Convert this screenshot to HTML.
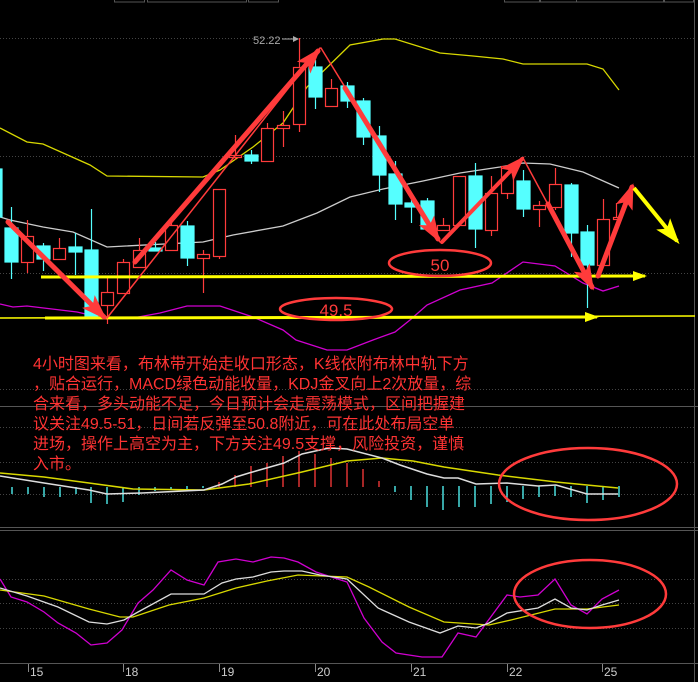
<!DOCTYPE html>
<html><head><meta charset="utf-8"><style>
html,body{margin:0;padding:0;background:#000;}
svg{display:block;}
.t{font-family:"Liberation Sans","Noto Sans CJK SC",sans-serif;}
</style></head><body>
<svg width="698" height="682" viewBox="0 0 698 682" xmlns="http://www.w3.org/2000/svg">
<defs>
<marker id="rh" markerUnits="userSpaceOnUse" markerWidth="26" markerHeight="18" refX="22" refY="9" orient="auto"><path d="M0,0 L26,9 L0,18 L6,9 z" fill="#ff3b3b"/></marker>
<marker id="yh" markerUnits="userSpaceOnUse" markerWidth="26" markerHeight="18" refX="22" refY="9" orient="auto"><path d="M0,0 L26,9 L0,18 L6,9 z" fill="#ffff00"/></marker>
<marker id="yh2" markerUnits="userSpaceOnUse" markerWidth="14" markerHeight="10" refX="12" refY="5" orient="auto"><path d="M0,0 L14,5 L0,10 z" fill="#ffff00"/></marker>
</defs>
<rect width="698" height="682" fill="#000"/>
<!-- top tabs -->
<g fill="none" stroke="#555" stroke-width="1">
<rect x="114.5" y="-5" width="30" height="7"/><rect x="147.5" y="-5" width="99" height="7"/><rect x="248.5" y="-5" width="30" height="7"/>
<rect x="504.5" y="-5" width="35" height="7"/><rect x="540.5" y="-5" width="36" height="7"/><rect x="576.5" y="-5" width="87" height="7"/><rect x="664.5" y="-5" width="29" height="7"/>
</g>
<!-- grid -->
<g stroke="#444" stroke-width="1" stroke-dasharray="1,2">
<line x1="0" y1="38.5" x2="694" y2="38.5"/><line x1="0" y1="156.5" x2="694" y2="156.5"/><line x1="0" y1="273.5" x2="694" y2="273.5"/><line x1="0" y1="389.5" x2="694" y2="389.5"/>
<line x1="0" y1="427.5" x2="694" y2="427.5"/><line x1="0" y1="462.5" x2="694" y2="462.5"/><line x1="0" y1="494.5" x2="694" y2="494.5"/>
<line x1="0" y1="579.5" x2="694" y2="579.5"/><line x1="0" y1="603.5" x2="694" y2="603.5"/><line x1="0" y1="628.5" x2="694" y2="628.5"/>
</g>
<g stroke="#555" stroke-width="1">
<line x1="0" y1="406.5" x2="698" y2="406.5"/><line x1="0" y1="527.5" x2="698" y2="527.5"/><line x1="0" y1="530.5" x2="698" y2="530.5"/><line x1="0" y1="663.5" x2="698" y2="663.5"/>
<line x1="694.5" y1="0" x2="694.5" y2="682"/>
</g>
<!-- bollinger -->
<polyline fill="none" stroke="#d8d800" stroke-width="1.3" points="0,128 27,142 43,144 90,165 107,176 203,177 220,170 253,147 283,123 307,87 350,45 383,39 395,39 440,53 473,56 503,59 523,64 587,64 603,69 619,90"/>
<polyline fill="none" stroke="#ccc" stroke-width="1.3" points="0,217 10,220 43,227 73,232 107,247 203,242 233,235 283,226 317,213 350,197 383,189 423,181 460,173 500,167 523,163 550,164 583,172 619,188"/>
<polyline fill="none" stroke="#d000d0" stroke-width="1.3" points="0,304 13,307 27,306 77,312 103,318 133,318 160,313 187,306 220,306 253,317 283,330 296,340 327,350 347,350 373,340 395,332 410,320 427,305 460,290 492,283 523,262 555,266 583,283 603,291 619,286"/>
<!-- candles -->
<g stroke-width="1.2">
<g stroke="#55ffff" fill="#55ffff">
<rect x="-2" y="169" width="4" height="48"/>
<line x1="11.5" y1="207" x2="11.5" y2="279"/><rect x="5" y="228" width="13" height="34"/>
<line x1="43.5" y1="243" x2="43.5" y2="271"/><rect x="37" y="246" width="13" height="13"/>
<line x1="75.5" y1="233" x2="75.5" y2="275"/><rect x="69" y="247" width="13" height="5"/>
<line x1="91.5" y1="209" x2="91.5" y2="317"/><rect x="85" y="250" width="13" height="67"/>
<line x1="155.5" y1="242" x2="155.5" y2="251"/><rect x="149" y="248" width="13" height="3"/>
<line x1="187.5" y1="221" x2="187.5" y2="266"/><rect x="181" y="226" width="13" height="32"/>
<line x1="251.5" y1="150" x2="251.5" y2="164"/><rect x="245" y="155" width="13" height="6"/>
<line x1="315.5" y1="60" x2="315.5" y2="109"/><rect x="309" y="67" width="13" height="30"/>
<line x1="347.5" y1="82" x2="347.5" y2="108"/><rect x="341" y="86" width="13" height="15"/>
<line x1="363.5" y1="98" x2="363.5" y2="145"/><rect x="357" y="101" width="13" height="36"/>
<line x1="379.5" y1="126" x2="379.5" y2="192"/><rect x="373" y="136" width="13" height="39"/>
<line x1="395.5" y1="161" x2="395.5" y2="220"/><rect x="389" y="174" width="13" height="30"/>
<line x1="411.5" y1="200" x2="411.5" y2="223"/><rect x="405" y="203" width="13" height="4"/>
<line x1="427.5" y1="198" x2="427.5" y2="229"/><rect x="421" y="201" width="13" height="28"/>
<line x1="475.5" y1="163" x2="475.5" y2="248"/><rect x="469" y="176" width="13" height="53"/>
<line x1="523.5" y1="170" x2="523.5" y2="217"/><rect x="517" y="181" width="13" height="28"/>
<line x1="571.5" y1="183" x2="571.5" y2="257"/><rect x="565" y="185" width="13" height="48"/>
<line x1="587.5" y1="225" x2="587.5" y2="308"/><rect x="581" y="232" width="13" height="33"/>
</g>
<g stroke="#ff3b3b" fill="#000">
<line x1="27.5" y1="220" x2="27.5" y2="273"/><rect x="21.5" y="236.5" width="12" height="26"/>
<line x1="59.5" y1="238" x2="59.5" y2="248"/><rect x="53.5" y="248.5" width="12" height="11"/>
<line x1="107.5" y1="277" x2="107.5" y2="324"/><rect x="101.5" y="292.5" width="12" height="13"/>
<line x1="123.5" y1="259" x2="123.5" y2="262"/><rect x="117.5" y="262.5" width="12" height="31"/>
<line x1="139.5" y1="238" x2="139.5" y2="250"/><rect x="133.5" y="250.5" width="12" height="17"/>
<line x1="171.5" y1="218" x2="171.5" y2="225"/><rect x="165.5" y="225.5" width="12" height="25"/>
<line x1="203.5" y1="250" x2="203.5" y2="293"/><rect x="197.5" y="254.5" width="12" height="4"/>
<line x1="219.5" y1="256" x2="219.5" y2="259"/><rect x="213.5" y="189.5" width="12" height="67"/>
<line x1="235.5" y1="135" x2="235.5" y2="160"/><rect x="229.5" y="155.5" width="12" height="2"/>
<line x1="267.5" y1="123" x2="267.5" y2="128"/><rect x="261.5" y="128.5" width="12" height="33"/>
<line x1="283.5" y1="111" x2="283.5" y2="147"/><rect x="277.5" y="125.5" width="12" height="3"/>
<line x1="299.5" y1="38" x2="299.5" y2="132"/><rect x="293.5" y="67.5" width="12" height="57"/>
<line x1="331.5" y1="79" x2="331.5" y2="107"/><rect x="325.5" y="88.5" width="12" height="18"/>
<line x1="443.5" y1="218" x2="443.5" y2="230"/><rect x="437.5" y="225.5" width="12" height="5"/>
<rect x="453.5" y="176.5" width="12" height="49"/>
<line x1="491.5" y1="176" x2="491.5" y2="236"/><rect x="485.5" y="193.5" width="12" height="37"/>
<line x1="507.5" y1="193" x2="507.5" y2="199"/><rect x="501.5" y="166.5" width="12" height="27"/>
<line x1="539.5" y1="201" x2="539.5" y2="227"/><rect x="533.5" y="205.5" width="12" height="4"/>
<line x1="555.5" y1="168" x2="555.5" y2="210"/><rect x="549.5" y="184.5" width="12" height="23"/>
<line x1="603.5" y1="199" x2="603.5" y2="219"/><rect x="597.5" y="219.5" width="12" height="46"/>
<line x1="616.5" y1="203" x2="616.5" y2="217"/><rect x="613.5" y="217.5" width="6" height="2"/>
</g>
</g>
<!-- 52.22 -->
<text x="253" y="44" class="t" font-size="11" fill="#aaa">52.22</text>
<line x1="282" y1="39" x2="294" y2="39" stroke="#aaa"/><path d="M293,36 L299,39 L293,42z" fill="#aaa"/>
<!-- yellow lines -->
<line x1="0" y1="318" x2="695" y2="316" stroke="#ffff00" stroke-width="1.5"/>
<line x1="45" y1="318" x2="597" y2="317" stroke="#ffff00" stroke-width="3" marker-end="url(#yh2)"/>
<line x1="41" y1="277" x2="645" y2="276" stroke="#ffff00" stroke-width="3" marker-end="url(#yh2)"/>
<!-- ellipses -->
<ellipse cx="440" cy="263" rx="51" ry="13" fill="none" stroke="#ff3b3b" stroke-width="2.5"/>
<text x="440" y="271" text-anchor="middle" class="t" font-size="17" fill="#ff3b3b">50</text>
<ellipse cx="336" cy="309" rx="56" ry="11" fill="none" stroke="#ff3b3b" stroke-width="2.5"/>
<text x="336" y="316" text-anchor="middle" class="t" font-size="17" fill="#ff3b3b">49.5</text>
<!-- red arrows -->
<g stroke="#ff3b3b" fill="none" stroke-linecap="round">
<line x1="8" y1="222" x2="104" y2="317" stroke-width="5" marker-end="url(#rh)"/>
<line x1="107" y1="318" x2="320" y2="48" stroke-width="1.5"/>
<line x1="135" y1="262" x2="318" y2="51" stroke-width="5" marker-end="url(#rh)"/>
<line x1="321" y1="48" x2="440" y2="242" stroke-width="1.5"/>
<line x1="345" y1="88" x2="438" y2="239" stroke-width="5" marker-end="url(#rh)"/>
<line x1="442" y1="242" x2="522" y2="159" stroke-width="4" marker-end="url(#rh)"/>
<line x1="523" y1="158" x2="593" y2="288" stroke-width="1.5"/>
<line x1="548" y1="204" x2="592" y2="287" stroke-width="5" marker-end="url(#rh)"/>
<line x1="598" y1="276" x2="632" y2="187" stroke-width="5" marker-end="url(#rh)"/>
</g>
<line x1="634" y1="188" x2="677" y2="241" stroke="#ffff00" stroke-width="4" marker-end="url(#yh)"/>
<!-- MACD -->
<g stroke-width="1.3">
<g stroke="#55ffff">
<line x1="12" y1="487" x2="12" y2="494"/><line x1="28" y1="487" x2="28" y2="494"/><line x1="44" y1="487" x2="44" y2="497"/><line x1="60" y1="487" x2="60" y2="497"/><line x1="76" y1="487" x2="76" y2="494"/><line x1="91" y1="487" x2="91" y2="503"/><line x1="107" y1="487" x2="107" y2="504"/><line x1="123" y1="487" x2="123" y2="502"/><line x1="139" y1="487" x2="139" y2="495"/>
<line x1="155" y1="487" x2="155" y2="491"/><line x1="171" y1="487" x2="171" y2="490"/><line x1="187" y1="486" x2="187" y2="489"/><line x1="203" y1="486" x2="203" y2="488"/>
<line x1="395" y1="486" x2="395" y2="492"/><line x1="411" y1="486" x2="411" y2="500"/><line x1="427" y1="486" x2="427" y2="507"/><line x1="443" y1="486" x2="443" y2="510"/><line x1="459" y1="486" x2="459" y2="507"/><line x1="475" y1="486" x2="475" y2="507"/><line x1="491" y1="486" x2="491" y2="504"/><line x1="507" y1="486" x2="507" y2="502"/><line x1="523" y1="486" x2="523" y2="499"/><line x1="539" y1="486" x2="539" y2="497"/><line x1="555" y1="486" x2="555" y2="496"/><line x1="571" y1="486" x2="571" y2="497"/><line x1="587" y1="486" x2="587" y2="503"/><line x1="603" y1="486" x2="603" y2="500"/><line x1="619" y1="486" x2="619" y2="497"/>
</g>
<g stroke="#ff3b3b">
<line x1="219" y1="487" x2="219" y2="482"/><line x1="235" y1="487" x2="235" y2="475"/><line x1="251" y1="487" x2="251" y2="466"/><line x1="267" y1="487" x2="267" y2="463"/><line x1="283" y1="487" x2="283" y2="456"/><line x1="299" y1="487" x2="299" y2="451"/><line x1="315" y1="487" x2="315" y2="454"/><line x1="331" y1="487" x2="331" y2="458"/><line x1="347" y1="487" x2="347" y2="463"/><line x1="363" y1="487" x2="363" y2="469"/><line x1="379" y1="487" x2="379" y2="481"/>
</g>
</g>
<polyline fill="none" stroke="#d8d800" stroke-width="1.5" points="0,473 44,477 89,483 133,489 204,490 249,484 302,472 347,461 382,458 413,461 444,467 498,475 556,482 618,488"/>
<polyline fill="none" stroke="#ddd" stroke-width="1.5" points="0,476 44,483 89,490 107,494 142,493 204,490 222,484 236,477 249,473 284,463 302,454 329,448 347,449 382,458 400,465 427,474 444,478 458,478 476,484 507,483 538,486 556,485 587,494 618,494"/>
<ellipse cx="588" cy="484" rx="89" ry="36" fill="none" stroke="#ff3b3b" stroke-width="2.5"/>
<!-- KDJ -->
<polyline fill="none" stroke="#d000d0" stroke-width="1.3" points="0,579 11,597 27,602 44,612 58,623 76,633 91,645 107,643 122,630 138,603 153,590 171,570 187,580 204,585 218,562 236,559 253,562 271,557 284,558 298,562 316,572 347,582 364,618 382,642 396,653 422,657 442,657 458,633 476,637 507,595 520,597 538,595 555,579 571,605 587,614 602,599 619,590"/>
<polyline fill="none" stroke="#d8d800" stroke-width="1.3" points="0,590 44,596 89,609 120,617 133,617 169,605 204,598 236,588 267,581 298,575 347,577 369,587 409,607 444,622 489,625 511,620 555,609 587,609 619,605"/>
<polyline fill="none" stroke="#ddd" stroke-width="1.3" points="0,588 27,596 58,607 89,622 107,624 124,620 138,612 171,594 204,594 222,583 236,579 253,577 271,572 284,571 302,571 320,575 347,579 378,608 409,622 440,633 458,626 476,628 489,623 507,613 538,608 555,599 571,608 587,610 602,605 619,600"/>
<ellipse cx="590" cy="594" rx="76" ry="34" fill="none" stroke="#ff3b3b" stroke-width="2.5"/>
<!-- axis -->
<g stroke="#888"><line x1="28.5" y1="664" x2="28.5" y2="672"/><line x1="123.5" y1="664" x2="123.5" y2="672"/><line x1="219.5" y1="664" x2="219.5" y2="672"/><line x1="315.5" y1="664" x2="315.5" y2="672"/><line x1="411.5" y1="664" x2="411.5" y2="672"/><line x1="507.5" y1="664" x2="507.5" y2="672"/><line x1="602.5" y1="664" x2="602.5" y2="672"/></g>
<g class="t" font-size="12" fill="#ccc">
<text x="30" y="676">15</text><text x="125" y="676">18</text><text x="221" y="676">19</text><text x="317" y="676">20</text><text x="413" y="676">21</text><text x="509" y="676">22</text><text x="604" y="676">25</text>
</g>
<!-- commentary -->
<g class="t" font-size="16" fill="#ff3333">
<text x="33" y="369">4小时图来看，布林带开始走收口形态，K线依附布林中轨下方</text>
<text x="33" y="389">，贴合运行，MACD绿色动能收量，KDJ金叉向上2次放量，综</text>
<text x="33" y="409">合来看，多头动能不足，今日预计会走震荡模式，区间把握建</text>
<text x="33" y="429">议关注49.5-51，日间若反弹至50.8附近，可在此处布局空单</text>
<text x="33" y="449">进场，操作上高空为主，下方关注49.5支撑，风险投资，谨慎</text>
<text x="33" y="469">入市。</text>
</g>
</svg>
</body></html>
